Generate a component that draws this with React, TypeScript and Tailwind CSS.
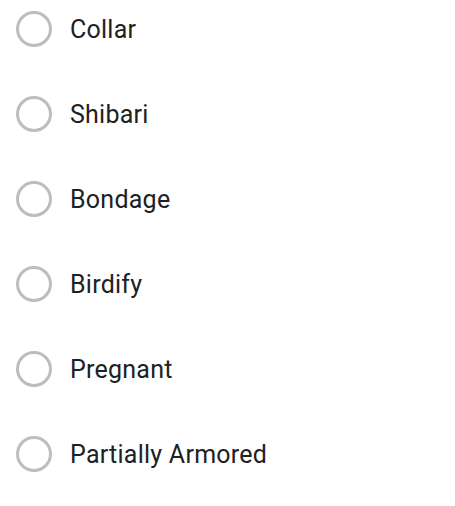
import React from "react";

const items = ["Collar", "Shibari", "Bondage", "Birdify", "Pregnant", "Partially Armored"];

export default function App() {
  return (
    <div className="w-[455px] h-[506px] bg-white pt-[11px] pl-[16px] flex flex-col gap-[49px]" style={{ fontFamily: "Roboto, sans-serif" }}>
      {items.map((t) => (
        <div key={t} className="flex items-center h-[36px]">
          <div className="w-[36px] h-[36px] rounded-full border-[3px] border-[#bdbdbd] shrink-0" />
          <span className="ml-[18px] text-[25px] text-[#202124] leading-none tracking-[0.25px]">{t}</span>
        </div>
      ))}
    </div>
  );
}
